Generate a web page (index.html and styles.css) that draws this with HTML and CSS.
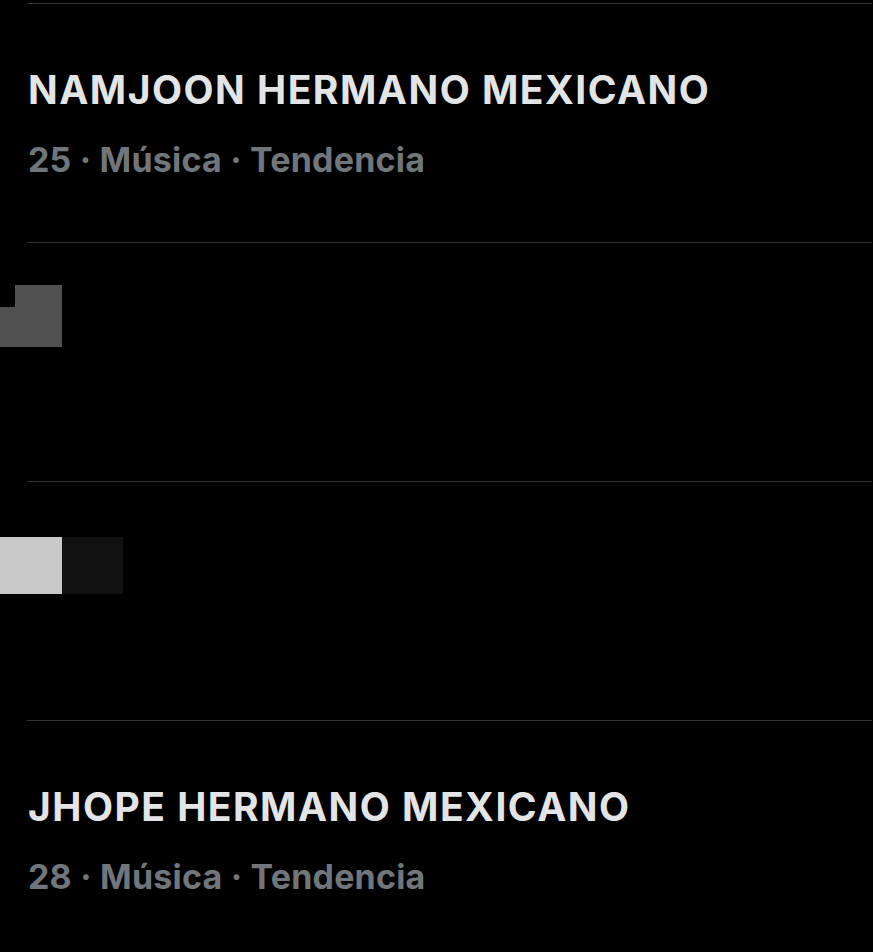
FILE: index.html
```html
<!DOCTYPE html>
<html>
    <head>
        <title>Tendencias</title>
        <link rel="stylesheet" href="styles.css">
    </head>

    <body>
        <div class="list">
            <div class="divider"></div>
            <div class="trend">
                <div class="trend-title">NAMJOON HERMANO MEXICANO</div>
                <div class="trend-meta">25 · Música · Tendencia</div>
            </div>

            <div class="divider"></div>
            <div class="trend censored">
                <div class="blot blot-step">
                    <div class="step-low"></div>
                    <div class="step-high"></div>
                </div>
            </div>

            <div class="divider"></div>
            <div class="trend censored">
                <div class="blot blot-pair">
                    <div class="pair-light"></div>
                    <div class="pair-dark"></div>
                </div>
            </div>

            <div class="divider"></div>
            <div class="trend">
                <div class="trend-title">JHOPE HERMANO MEXICANO</div>
                <div class="trend-meta">28 · Música · Tendencia</div>
            </div>
        </div>
    </body>
</html>
```

FILE: styles.css
```css
html {
    height: 100%;
    background: #000000;
}
body {
    margin: 0px;
    padding-top: 3px;
    background: #000000;
    font-family: Inter, "Liberation Sans", sans-serif;
    overflow: hidden;
}
.divider {
    height: 1px;
    margin-left: 27px;
    margin-right: 1px;
    background: #2f3336;
}
.trend {
    height: 238px;
    padding-left: 28px;
    box-sizing: border-box;
    display: flex;
    flex-flow: column nowrap;
}
.trend-title {
    margin-top: 62px;
    color: #e2e4e5;
    font-size: 39px;
    font-weight: 700;
    line-height: 48px;
    letter-spacing: 1.5px;
}
.trend-meta {
    margin-top: 24px;
    color: #71767b;
    font-size: 34px;
    font-weight: 700;
    line-height: 44px;
    letter-spacing: 0.2px;
}
.censored {
    padding-left: 0px;
}
.blot {
    display: flex;
    flex-flow: row nowrap;
}
.blot-step {
    margin-top: 42px;
    align-items: flex-end;
}
.step-low {
    width: 15px;
    height: 40px;
    background: #505050;
}
.step-high {
    width: 47px;
    height: 62px;
    background: #505050;
}
.blot-pair {
    margin-top: 55px;
}
.pair-light {
    width: 62px;
    height: 57px;
    background: #c8c8c8;
}
.pair-dark {
    width: 61px;
    height: 57px;
    background: #111111;
}
```
